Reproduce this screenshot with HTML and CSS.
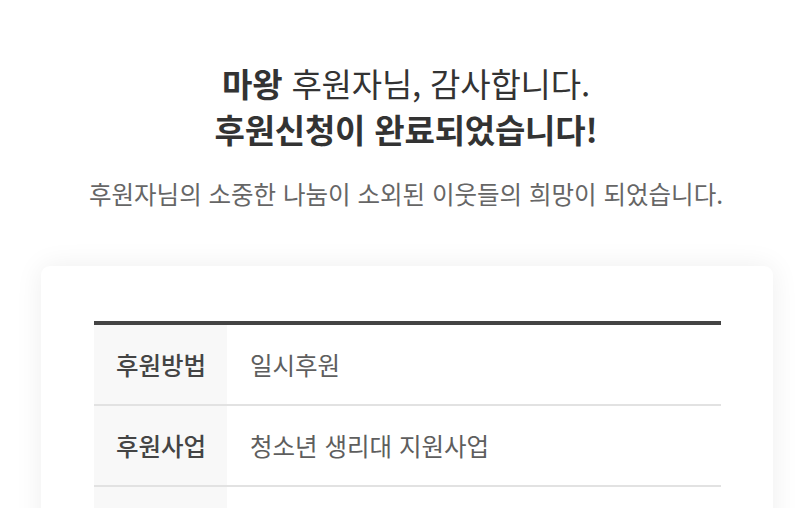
FILE: index.html
```html
<!DOCTYPE html>
<html lang="ko">
<head>
<meta charset="utf-8">
<link rel="stylesheet" href="styles.css">
</head>
<body>
<div class="page">
  <h1 class="title">
    <span class="line"><strong>마왕</strong> 후원자님, 감사합니다.</span>
    <span class="line bold">후원신청이 완료되었습니다!</span>
  </h1>
  <p class="sub">후원자님의 소중한 나눔이 소외된 이웃들의 희망이 되었습니다.</p>
  <div class="card">
    <div class="table">
      <div class="row">
        <div class="label">후원방법</div>
        <div class="value">일시후원</div>
      </div>
      <div class="row">
        <div class="label">후원사업</div>
        <div class="value">청소년 생리대 지원사업</div>
      </div>
      <div class="row">
        <div class="label">&nbsp;</div>
        <div class="value">&nbsp;</div>
      </div>
    </div>
  </div>
</div>
</body>
</html>
```
FILE: styles.css
```css
* { box-sizing: border-box; }
html, body { margin: 0; padding: 0; background: #fff; }
body {
  font-family: "Noto Sans CJK KR", "Noto Sans", sans-serif;
  color: #333;
  overflow: hidden;
}
.page { padding-top: 60px; }
.title {
  margin: 0;
  text-align: center;
  font-size: 33px;
  font-weight: 400;
  line-height: 46px;
  color: #333;
  letter-spacing: -0.2px;
}
.title .line { display: block; }
.title strong, .title .bold { font-weight: 700; }
.sub {
  margin: 27px 0 0;
  text-align: center;
  font-size: 24.5px;
  line-height: 30px;
  color: #666;
}
.card {
  margin: 57px 39px 0 41px;
  background: #fff;
  border-radius: 9px;
  box-shadow: 0 0 28px rgba(0,0,0,0.07);
  padding: 55px 52px 40px 53px;
}
.table { border-top: 4px solid #444; }
.row {
  display: flex;
  border-bottom: 2px solid #e2e2e2;
  height: 81px;
}
.label {
  width: 133px;
  background: #f8f8f8;
  padding-left: 22px;
  display: flex;
  align-items: center;
  font-size: 24.5px;
  font-weight: 500;
  color: #444;
}
.value {
  flex: 1;
  padding-left: 23px;
  display: flex;
  align-items: center;
  font-size: 24.5px;
  color: #5e5e5e;
}
```
